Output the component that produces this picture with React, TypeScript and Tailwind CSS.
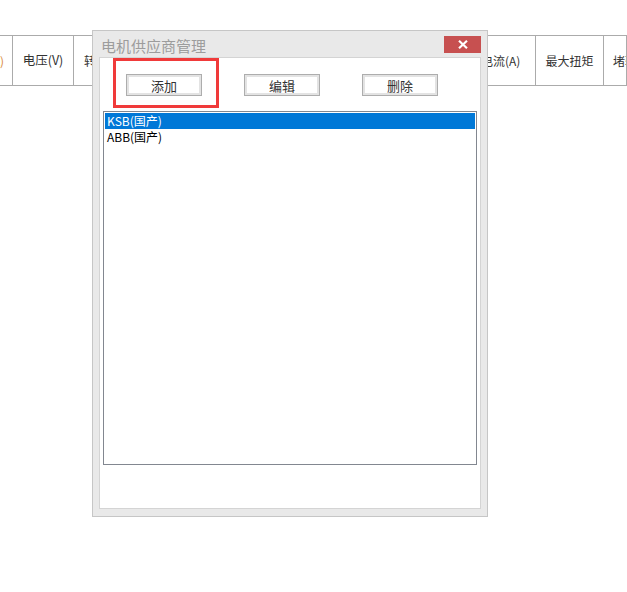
import React from 'react';

const headers = [
  { label: '(A)', className: 'w-[13px] justify-end pr-[8px] text-[#d98a3a]' },
  { label: '电压(V)', className: 'w-[61px] justify-center text-[12.5px]' },
  { label: '转速(r/min)', className: 'w-[127px] justify-start pl-[10px]' },
  { label: '功率(kW)', className: 'w-[138px] justify-center' },
  { label: '额定频率', className: 'w-[135px] justify-center' },
  { label: '电流(A)', className: 'w-[62px] justify-start pl-[7px]' },
  { label: '最大扭矩', className: 'w-[68px] justify-center' },
  { label: '堵转转矩', className: 'flex-1 justify-start pl-[9px]' },
];

const suppliers = ['KSB(国产)', 'ABB(国产)'];

function DialogButton({ label }: { label: string }) {
  return (
    <button className="h-[22px] w-[76px] border border-[#adadad] bg-white p-0 text-[13px] text-[#333]">
      <span className="flex h-full w-full items-center justify-center border-2 border-[#e3e3e3] leading-none">
        {label}
      </span>
    </button>
  );
}

export default function App() {
  return (
    <div className="relative h-[592px] w-[627px] overflow-hidden bg-white font-['Noto_Sans_CJK_SC','Noto_Sans',sans-serif]">
      {/* table header behind the dialog */}
      <div className="pt-[35px]">
        <div className="flex h-[51px] border-y border-[#ababab] text-[12px] text-[#333]">
          {headers.map((h) => (
            <div
              key={h.label}
              className={`flex items-center overflow-hidden whitespace-nowrap border-r border-[#ababab] ${h.className}`}
            >
              {h.label}
            </div>
          ))}
        </div>
      </div>

      {/* supplier dialog */}
      <div className="absolute left-[92px] top-[30px] flex h-[487px] w-[396px] flex-col border border-[#c6c6c6] bg-[#e9e9e9]">
        <div className="flex h-[26px] items-center justify-between pl-[8px] pr-[6px]">
          <span className="mt-[3px] text-[15px] leading-none text-[#9c9c9c]">电机供应商管理</span>
          <button className="mt-[1px] flex h-[17px] w-[37px] items-center justify-center bg-[#c75050]">
            <svg width="10" height="9" viewBox="0 0 10 9">
              <path d="M1 0.8 L9 8.2 M9 0.8 L1 8.2" stroke="white" strokeWidth="2.2" />
            </svg>
          </button>
        </div>
        <div className="mx-[6px] mb-[7px] flex flex-1 flex-col border border-[#d4d4d4] bg-white">
          <div className="flex items-center justify-between pl-[26px] pr-[42px] pt-[16px]">
            <DialogButton label="添加" />
            <DialogButton label="编辑" />
            <DialogButton label="删除" />
          </div>
          <div className="mx-[3px] mt-[15px] h-[354px] border border-[#828790] p-px text-[12px] leading-[16px]">
            {suppliers.map((s, i) => (
              <div
                key={s}
                className={`pl-[2px] ${i === 0 ? 'bg-[#0078d7] text-white' : 'text-black'}`}
              >
                {s}
              </div>
            ))}
          </div>
        </div>
      </div>

      {/* red annotation box */}
      <div className="absolute left-[113px] top-[58px] h-[50px] w-[106px] border-[3px] border-[#f03a3a]" />
    </div>
  );
}
